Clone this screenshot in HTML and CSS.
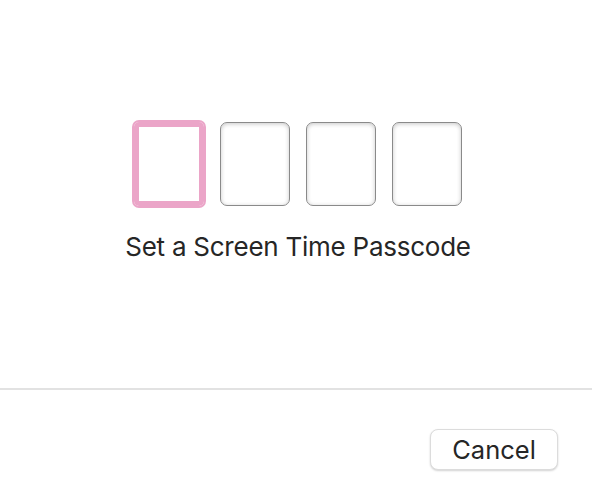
FILE: index.html
```html
<!DOCTYPE html>
<html lang="en">
<head>
  <meta charset="UTF-8" />
  <title>Screen Time Passcode</title>
  <link rel="stylesheet" href="styles.css">
</head>
<body>
  <div class="sheet">

    <div class="passcode-area">
      <div class="digits">
        <div class="digit focused"></div>
        <div class="digit"></div>
        <div class="digit"></div>
        <div class="digit"></div>
      </div>
      <p class="prompt">Set a Screen Time Passcode</p>
    </div>

    <div class="footer">
      <button class="btn">Cancel</button>
    </div>

  </div>
</body>
</html>
```

FILE: styles.css
```css
* {
  margin: 0;
  padding: 0;
  box-sizing: border-box;
}

body {
  margin: 0;
  background: #fff;
  font-family: Inter, "Liberation Sans", Arial, sans-serif;
  color: #262626;
}

.sheet {
  width: 592px;
  height: 502px;
  display: flex;
  flex-direction: column;
}

.passcode-area {
  height: 390px;
  display: flex;
  flex-direction: column;
  align-items: center;
  padding-top: 122px;
  padding-left: 4px;
  border-bottom: 2px solid #e2e2e2;
}

.digits {
  display: flex;
  gap: 16px;
}

.digit {
  width: 70px;
  height: 84px;
  border: 1px solid #8a8a8a;
  border-radius: 7px;
  background: #fff;
  box-shadow: inset 0 1px 4px rgba(0, 0, 0, 0.22);
}

/* anneau de focus rose */
.digit.focused {
  border: 5px solid #eba5c8;
  outline: 2px solid #eba5c8;
  border-radius: 5px;
  box-shadow: none;
}

.prompt {
  margin-top: 24px;
  font-size: 26px;
  letter-spacing: -0.25px;
  line-height: 34px;
}

.footer {
  flex: 1;
  display: flex;
  justify-content: flex-end;
  padding: 39px 34px 0 0;
}

.btn {
  width: 128px;
  height: 41px;
  border: 1px solid #dcdcdc;
  border-radius: 8px;
  background: #fff;
  box-shadow: 0 1px 2px rgba(0, 0, 0, 0.18);
  font-family: Inter, "Liberation Sans", Arial, sans-serif;
  font-size: 25.5px;
  color: #262626;
}
```
